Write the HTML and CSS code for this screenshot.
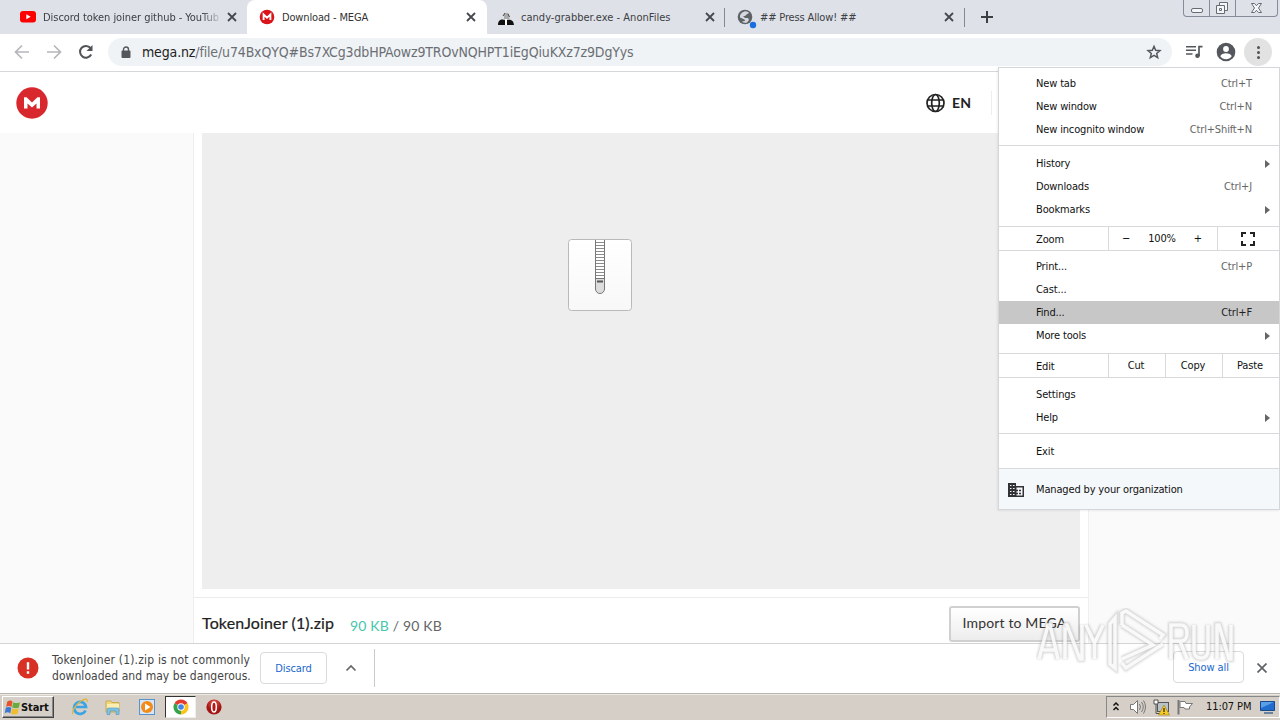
FILE: index.html
```html
<!DOCTYPE html>
<html lang="en">
<head>
<meta charset="utf-8">
<title>Download - MEGA</title>
<link rel="stylesheet" href="styles.css">
</head>
<body>
<div class="tabs">
  <div class="tab first">
    <svg class="fav" width="16" height="16" viewBox="0 0 16 16"><rect y="2" width="16" height="11.5" rx="3" fill="#f00"/><path d="M6.3 5.2v5l4.4-2.5z" fill="#fff"/></svg>
    <span class="title fade">Discord token joiner github - YouTub</span>
    <svg class="x" width="10" height="10" viewBox="0 0 10 10"><path d="M1 1l8 8M9 1l-8 8"/></svg>
  </div>
  <div class="tab active">
    <svg class="fav" width="16" height="16" viewBox="0 0 16 16"><circle cx="8" cy="8" r="7.3" fill="#d9141b"/><path d="M4.6 11V5.5L8 8.7l3.4-3.2V11" fill="none" stroke="#fff" stroke-width="1.9"/></svg>
    <span class="title">Download - MEGA</span>
    <svg class="x" width="10" height="10" viewBox="0 0 10 10"><path d="M1 1l8 8M9 1l-8 8"/></svg>
  </div>
  <div class="tab third">
    <svg class="fav" width="16" height="18" viewBox="0 0 16 18"><path d="M0 17c0-4 2-5.500 4.500-5.500l2.500.5v5zM9 17v-5c3.500-.8 6.500 0 7 5z" fill="#111"/><path d="M6 7c1-2.500 4-3 5-.5l.5 5H6z" fill="#aaa"/><path d="M5 8l2-3M10 6l1.500 3" stroke="#444"/><path d="M8 11v6" stroke="#fff" stroke-width="2"/></svg>
    <span class="title">candy-grabber.exe - AnonFiles</span>
    <svg class="x" width="10" height="10" viewBox="0 0 10 10"><path d="M1 1l8 8M9 1l-8 8"/></svg>
  </div>
  <div class="tab fourth">
    <svg class="fav" width="20" height="20" viewBox="0 0 20 20"><circle cx="8" cy="8" r="7.300" fill="#5f6368"/><path d="M7.500 2.500C9 2 11 3 12 4L9.500 5.500 8 7 6 7 8 9l3 0 1 2-2 2.500c-2 .8-4 0-5-1l3-.5-.5-1.500L3 8.500C2.500 6 4 3.500 7.500 2.500z" fill="#d5d9df"/><circle cx="16" cy="16" r="3.200" fill="#1a6ee0"/></svg>
    <span class="title">## Press Allow! ##</span>
    <svg class="x" width="10" height="10" viewBox="0 0 10 10"><path d="M1 1l8 8M9 1l-8 8"/></svg>
  </div>
  <svg class="plus" width="12" height="12" viewBox="0 0 12 12"><path d="M6 0v12M0 6h12" stroke="#3c4043" stroke-width="2"/></svg>
  <div class="winctl">
    <div><svg width="25" height="16"><rect x="7.500" y="8.500" width="11" height="4" rx="1.500" fill="#f5f6f7" stroke="#666c75"/></svg></div>
    <div><svg width="25" height="16"><path d="M9.500 2.500h8v8h-8z" fill="#f5f6f7" stroke="#666c75"/><path d="M6.500 5.500h8v8h-8z" fill="#f5f6f7" stroke="#666c75"/><path d="M9.500 8.500h2v2h-2z" fill="none" stroke="#666c75"/></svg></div>
    <div><svg width="41" height="16"><path d="M15.500 3.500h3l2 2.200 2-2.200h3l-3 4.500 3 4.500h-3l-2-2.200-2 2.200h-3l3-4.500z" fill="#f5f6f7" stroke="#666c75"/></svg></div>
  </div>
</div>

<div class="toolbar">
  <svg width="16" height="16" viewBox="0 0 16 16" class="arrow"><path d="M15 8H2M8 1.500L1.500 8 8 14.500"/></svg>
  <svg width="16" height="16" viewBox="0 0 16 16" class="arrow"><path d="M1 8h13M8 1.500L14.500 8 8 14.500"/></svg>
  <svg width="16" height="16" viewBox="0 0 16 16" class="reload"><path d="M13.200 10.500A5.900 5.900 0 1 1 12.500 4" fill="none" stroke="#505357" stroke-width="2"/><path d="M14.500 1v6H8.500z" fill="#505357"/></svg>
  <div class="omnibox">
    <svg width="10" height="13" viewBox="0 0 10 13"><path d="M2.500 5V3.500a2.500 2.500 0 0 1 5 0V5" fill="none" stroke="#54585d" stroke-width="1.400"/><rect x=".5" y="4.500" width="9" height="7.500" rx="1" fill="#54585d"/></svg>
    <span class="url"><b>mega.nz</b>/file/u74BxQYQ#Bs7XCg3dbHPAowz9TROvNQHPT1iEgQiuKXz7z9DgYys</span>
    <svg class="star" width="16" height="16" viewBox="0 0 24 24"><path d="M12 3.500l2.500 6 6.500.5-5 4.300 1.600 6.200L12 17.200l-5.600 3.300L8 14.300 3 10l6.500-.5z" fill="none" stroke="#54585d" stroke-width="2.200"/></svg>
  </div>
  <svg class="music" width="18" height="14" viewBox="0 0 18 14"><path d="M0 1.700h10M0 5.300h10M0 9h6.500" stroke="#54585d" stroke-width="1.500"/><path d="M13 11V1.700h3.500" fill="none" stroke="#54585d" stroke-width="1.700"/><circle cx="11.500" cy="10.800" r="2.300" fill="#54585d"/></svg>
  <svg class="user" width="20" height="20" viewBox="0 0 20 20"><circle cx="10" cy="10" r="9.300" fill="#54585d"/><circle cx="10" cy="7" r="2.900" fill="#fff"/><path d="M4.300 14.300c1-4 10.400-4 11.400 0-2.500 4-8.900 4-11.400 0z" fill="#fff"/></svg>
  <div class="dots"><i></i><i></i><i></i></div>
</div>

<div class="page">
  <header>
    <svg width="32" height="32" viewBox="0 0 32 32"><circle cx="16" cy="16" r="15.700" fill="#d9272e"/><path d="M8 21.500V10.200h2.600L16 15.500l5.400-5.300H24v11.300h-3.500v-5L16 20.600l-4.500-4.100v5z" fill="#fff"/></svg>
    <svg class="globe" width="20" height="20" viewBox="0 0 20 20" fill="none" stroke="#222" stroke-width="1.700"><circle cx="10.500" cy="10" r="8.500"/><ellipse cx="10.500" cy="10" rx="3.800" ry="8.500"/><path d="M2.500 7h16M2.500 13h16"/></svg>
    <span class="lang">EN</span>
    <span class="hdiv"></span>
  </header>
  <div class="content">
    <div class="card">
      <div class="preview">
        <svg width="64" height="72" viewBox="0 0 64 72"><defs><linearGradient id="paper" x2="0" y2="1"><stop stop-color="#fff"/><stop offset="1" stop-color="#f8f8f8"/></linearGradient></defs><rect x=".5" y=".5" width="63" height="71" rx="3" fill="url(#paper)" stroke="#b9b9b9"/><path d="M27 1h10v49a5 5 0 0 1-10 0z" fill="#fff"/><path d="M28 3.500h8m-8 3h8m-8 3h8m-8 3h8m-8 3h8m-8 3h8m-8 3h8m-8 3h8m-8 3h8m-8 3h8m-8 3h8m-8 3h8" stroke="#8b8b8b"/><path d="M27.500 40h9v10a4.500 4.500 0 0 1-9 0z" fill="#ddd"/><path d="M27.500 1v49a4.500 4.500 0 0 0 9 0V1M27.500 39.500h9" fill="none" stroke="#777"/><path d="M29 42.500h6" stroke="#555" stroke-width="2"/></svg>
      </div>
      <div class="fileinfo">
        <span class="fname">TokenJoiner (1).zip</span>
        <span class="size"><em>90 KB</em> / 90 KB</span>
        <button class="import">Import to MEGA</button>
      </div>
    </div>
  </div>
</div>

<div class="shelf">
  <svg width="22" height="22" viewBox="0 0 22 22"><circle cx="11" cy="11" r="10.500" fill="#d93025"/><path d="M11 5.300v7.200M11 14.200v2.600" stroke="#fff" stroke-width="2.400"/></svg>
  <div class="warn"><span class="w1">TokenJoiner (1).zip is not commonly</span><span class="w2">downloaded and may be dangerous.</span></div>
  <button class="discard">Discard</button>
  <svg class="chev" width="12" height="8" viewBox="0 0 12 8"><path d="M1.500 6.500L6 2l4.500 4.500" fill="none" stroke="#666" stroke-width="1.700"/></svg>
  <span class="sdiv"></span>
  <button class="showall">Show all</button>
  <svg class="close" width="10" height="10" viewBox="0 0 10 10"><path d="M.5.5l9 9M9.500.5l-9 9" stroke="#5f6368" stroke-width="1.700"/></svg>
</div>

<div class="taskbar">
  <div class="start"><svg width="17" height="17" viewBox="0 0 16 16"><path d="M3 2.500c2-1.500 4-1.500 5 0L7 7.500c-2-1.500-3.500-1-5 0z" fill="#e5532d"/><path d="M8.700 3c2 1.300 4 1 6.300 0L14 8c-2 1-4 1-6.300 0z" fill="#69ac3c"/><path d="M1.700 8.300c2-1.300 3.500-1 5.200 0l-1 5c-2-1.300-3.500-1-5.200 0z" fill="#3c78cf"/><path d="M7.500 8.800c2 1.300 4 1 6.300 0l-1 5c-2 1-4 1-6.300 0z" fill="#f0bd31"/></svg><span>Start</span></div>
  <svg class="q1" width="18" height="18" viewBox="0 0 18 18"><path d="M14.500 12.500A6 6 0 1 1 15 9H5" fill="none" stroke="#3ba4e4" stroke-width="2.700"/><path d="M2 16C0 14 5 6 10 3c4-2.500 7-2.500 6 1" fill="none" stroke="#dfb73c" stroke-width="1.300"/></svg>
  <svg class="q2" width="18" height="18" viewBox="0 0 18 18"><path d="M2 3h5l1 1.500h7V14H2z" fill="#efd77c" stroke="#c9ab50"/><path d="M3 6h12v4H3z" fill="#faeeb3"/><path d="M3 16.500v-5q0-1.500 2-1.500h8q2 0 2 1.500v5h-3V13H6v3.500z" fill="#7bc0e6" stroke="#5494bd" stroke-width=".6"/></svg>
  <svg class="q3" width="18" height="18" viewBox="0 0 18 18"><rect x="1.500" y="1.500" width="15" height="15" fill="#d6e6f7" stroke="#5793cc"/><circle cx="9" cy="9" r="6" fill="#f38b19"/><path d="M7 5.500v7L12.500 9z" fill="#fff"/></svg>
  <div class="running"><svg width="16" height="16" viewBox="0 0 16 16"><path d="M8 8L1.500 4.250A7.500 7.500 0 0 1 14.500 4.250z" fill="#e33b2e"/><path d="M8 8l6.500-3.750A7.500 7.500 0 0 1 8 15.500z" fill="#fbc31b"/><path d="M8 8v7.500A7.500 7.500 0 0 1 1.500 4.250z" fill="#36a34c"/><circle cx="8" cy="8" r="3.700" fill="#fff"/><circle cx="8" cy="8" r="2.800" fill="#4285e8"/></svg></div>
  <svg class="q5" width="16" height="16" viewBox="0 0 16 16"><defs><radialGradient id="red" cy=".25"><stop stop-color="#ea5a50"/><stop offset="1" stop-color="#a31412"/></radialGradient></defs><circle cx="8" cy="8" r="7.600" fill="url(#red)"/><ellipse cx="8" cy="8" rx="2.300" ry="5" fill="#b01a18" stroke="#fff" stroke-width="1.500"/></svg>
  <div class="tray">
    <svg width="8" height="12" viewBox="0 0 8 12"><path d="M1.500 4.500L4 2l2.500 2.500M1.500 9L4 6.500 6.500 9" fill="none" stroke="#111" stroke-width="1.500"/></svg>
    <svg class="snd" width="18" height="16" viewBox="0 0 18 16"><path d="M1.500 5.500h3l4-4v13l-4-4h-3z" fill="#fff" stroke="#777"/><path d="M10.500 5q2 3 0 6M12.500 3q3.500 5 0 10M14.500 1.500q4 6.500 0 13" fill="none" stroke="#777"/></svg>
    <svg class="net" width="17" height="17" viewBox="0 0 17 17"><rect x="4.500" y="3.500" width="11" height="9" fill="#b7c2cb" stroke="#555"/><path d="M1 1h4v4H1z" fill="#fff" stroke="#555"/><path d="M3 5v9.500h5" fill="none" stroke="#555"/><path d="M11 6l5.500 10h-11z" fill="#f7cd25" stroke="#a9821a" stroke-width=".7"/><path d="M11 9v4M11 14v1" stroke="#222" stroke-width="1.200"/></svg>
    <svg class="flag" width="17" height="16" viewBox="0 0 17 16"><path d="M1.500 1v14.500" stroke="#777" stroke-width="2"/><path d="M3 2.500h5l1 2h6.500l-3 3.500 0 2H8l-1-1.500H3z" fill="#fff" stroke="#777"/></svg>
    <span class="clock">11:07 PM</span>
    <svg class="desk" width="15" height="14" viewBox="0 0 15 14"><path d="M.5 1.500h14v9H.5z" fill="#216dcd" stroke="#174990"/><path d="M1 2h13L1 8z" fill="#5b9ee8"/><path d="M4 13h9" stroke="#45688f" stroke-width="1.500"/></svg>
  </div>
</div>

<div class="menu">
  <div class="grp g1">
    <div class="row"><span>New tab</span><kbd>Ctrl+T</kbd></div>
    <div class="row"><span>New window</span><kbd>Ctrl+N</kbd></div>
    <div class="row"><span>New incognito window</span><kbd>Ctrl+Shift+N</kbd></div>
  </div>
  <div class="grp g2">
    <div class="row"><span>History</span><u></u></div>
    <div class="row"><span>Downloads</span><kbd>Ctrl+J</kbd></div>
    <div class="row"><span>Bookmarks</span><u></u></div>
  </div>
  <div class="cells zoomrow"><span class="lbl">Zoom</span><div class="zc"><span>−</span><span>100%</span><span>+</span></div><div class="full"><svg width="14" height="14" viewBox="0 0 14 14"><path d="M1 5V1h4M9 1h4v4M13 9v4H9M5 13H1V9" fill="none" stroke="#222" stroke-width="2"/></svg></div></div>
  <div class="grp g3">
    <div class="row"><span>Print...</span><kbd>Ctrl+P</kbd></div>
    <div class="row"><span>Cast...</span></div>
    <div class="row hot"><span>Find...</span><kbd>Ctrl+F</kbd></div>
    <div class="row"><span>More tools</span><u></u></div>
  </div>
  <div class="cells"><span class="lbl">Edit</span><div class="c">Cut</div><div class="c">Copy</div><div class="c">Paste</div></div>
  <div class="grp g4">
    <div class="row"><span>Settings</span></div>
    <div class="row"><span>Help</span><u></u></div>
  </div>
  <div class="grp g5"><div class="row"><span>Exit</span></div></div>
  <div class="managed"><svg width="16" height="14" viewBox="0 0 16 14"><path d="M0 0h8v3h8v11H0z" fill="#303236"/><path d="M2 2.500h1.500M5 2.500h1.500M2 5.500h1.500M5 5.500h1.500M2 8.500h1.500M5 8.500h1.500M2 11.500h1.500M5 11.500h1.500" stroke="#f6f9fc"/><path d="M8.500 4.500h6v8h-6z" fill="#f6f9fc"/><path d="M8 7.500h2M11 7.500h2M8 10.500h2M11 10.500h2" stroke="#303236" stroke-width="1.500"/></svg><span>Managed by your organization</span></div>
</div>

<svg class="mark" width="200" height="66" viewBox="0 0 200 66">
  <defs>
    <filter id="soft" x="-5%" y="-10%" width="110%" height="120%"><feGaussianBlur stdDeviation="1.2"/></filter>
    <g id="logo"><path d="M3 51L12 17h2L22 51M7 42h12M29 51V17h2l13 34h2V17M50 17l8.500 18v16M58.500 35L67 17M135 51V17h10q6 0 6 8t-6 8h-10M144 33l7 18M158 17v25q0 8 7 8t7-8V17M181 51V17h2l10 34h2V17"/><path d="M74 16v40l5 4V10zM86 17V5l4-2 37 24-3 4M86 17l31 20-31 14M127 36L90 60l-4-5"/></g>
  </defs>
  <use href="#logo" fill="none" stroke="#999" stroke-opacity=".4" stroke-width="6" filter="url(#soft)"/>
  <use href="#logo" fill="none" stroke="#fff" stroke-opacity=".85" stroke-width="3.500"/>
</svg>
</body>
</html>
```
FILE: styles.css
```css
* { box-sizing: border-box; }
body { margin: 0; width: 1280px; height: 720px; overflow: hidden; display: flex; flex-direction: column; position: relative; background: #fff; font: 11px/16px "DejaVu Sans Condensed", "DejaVu Sans", sans-serif; color: #111; }
svg { display: block; flex: none; }
button { font: inherit; padding: 0; }
span { white-space: nowrap; }

.tabs { height: 34px; flex: none; background: #dee1e8; display: flex; align-items: center; }
.tab { height: 34px; display: flex; align-items: center; position: relative; color: #3c4043; }
.first { width: 247px; padding: 0 9px 0 20px; }
.active { width: 240px; background: #fff; border-radius: 8px 8px 0 0; padding: 0 11px 0 12px; color: #333; }
.third { width: 238px; padding: 0 10px 0 11px; }
.fourth { width: 240px; padding: 0 11px 0 12px; }
.third::after, .fourth::after { content: ""; position: absolute; right: 0; top: 8px; width: 1px; height: 19px; background: #85898f; }
.title { margin-left: 7px; padding-top: 1px; flex: 1; overflow: hidden; font-size: 11px; }
.active .title { letter-spacing: -.15px; }
.third .title { letter-spacing: .02px; }
.fourth .title { letter-spacing: -.15px; }
.fourth .fav { margin: 3px -4px 0 0; }
.fade { flex: none; width: 180px; letter-spacing: -.05px; -webkit-mask-image: linear-gradient(90deg, #000 88%, transparent 100%); margin-right: 4px; }
.x path { stroke: #45494e; stroke-width: 1.800; }
.plus { margin-left: 16px; }
.winctl { display: flex; align-self: flex-start; margin-left: 190px; border: 1px solid #858b98; border-top: 0; border-radius: 0 0 4px 4px; height: 17px; }
.winctl div { border-right: 1px solid #858b98; }
.winctl div:last-child { border: 0; }

.toolbar { height: 38px; flex: none; border-bottom: 1px solid #d5d7da; background: #fff; display: flex; align-items: center; padding: 0 0 1px 14px; }
.toolbar > svg { margin-right: 16px; }
.arrow path { fill: none; stroke: #b5b7ba; stroke-width: 1.700; }
.toolbar .reload { margin-right: 14px; }
.omnibox { width: 1064px; height: 28px; border-radius: 14px; background: #f0f3f6; display: flex; align-items: center; padding: 0 10px 0 13px; }
.url { margin-left: 11px; flex: 1; font-size: 14px; color: #6b6f74; letter-spacing: -.15px; }
.url b { font-weight: 400; color: #222; }
.toolbar .music { margin: 0 12px 0 14px; }
.toolbar .user { margin-right: 8px; }
.dots { width: 28px; height: 28px; border-radius: 50%; background: #e2e2e3; display: flex; flex-direction: column; align-items: center; justify-content: center; gap: 2px; }
.dots i { width: 3px; height: 3px; border-radius: 50%; background: #505357; }

.page { height: 571px; flex: none; display: flex; flex-direction: column; overflow: hidden; background: #fafafa; }
header { height: 61px; flex: none; background: #fff; display: flex; align-items: center; padding: 1px 0 0 16px; }
.globe { margin-left: 877px; }
.lang { font: 700 14px/20px Lato, sans-serif; margin-left: 7px; letter-spacing: .2px; color: #222; }
.hdiv { width: 1px; height: 24px; background: #eee; margin-left: 20px; }
.content { display: flex; justify-content: center; }
.card { width: 896px; height: 510px; margin-left: 2px; background: #fff; border: solid #efefef; border-width: 0 1px; }
.preview { height: 456px; margin: 0 8px; background: #eee; display: flex; justify-content: center; padding: 106px 83px 0 0; }
.fileinfo { margin-top: 8px; height: 46px; border-top: 1px solid #ececec; padding: 0 8px; display: flex; align-items: flex-start; font-family: Lato, sans-serif; }
.fname { font-size: 16px; line-height: 20px; margin-top: 15px; color: #222; letter-spacing: .13px; -webkit-text-stroke: .2px; }
.size { font-size: 14px; line-height: 20px; margin: 18px 0 0 16px; color: #666; letter-spacing: .15px; }
.size em { font-style: normal; color: #46c6ac; }
.import { margin: 8px 0 0 auto; width: 131px; height: 36px; border: 2px solid #d0d0d0; border-radius: 3px; background: linear-gradient(#fff, #ededed); font-size: 14px; color: #333; letter-spacing: .15px; padding-bottom: 2px; }

.shelf { height: 50px; flex: none; background: #fff; border-top: 1px solid #d4d4d4; display: flex; align-items: center; padding: 0 13px 1px 17px; }
.warn { width: 200px; margin: 0 0 0 13px; display: flex; flex-direction: column; font-size: 12px; line-height: 16px; color: #444; }
.w1 { letter-spacing: .18px; }
.w2 { letter-spacing: .05px; }
.discard, .showall { height: 32px; border: 1px solid #d8dadd; border-radius: 4px; background: #fff; color: #1a67cc; font-size: 11px; letter-spacing: -.1px; padding-top: 1px; }
.discard { width: 67px; margin-left: 8px; }
.chev { margin-left: 18px; }
.sdiv { width: 1px; height: 38px; background: #cacaca; margin-left: 17px; }
.showall { width: 71px; margin: -2px 13px 0 auto; }

.taskbar { flex: 1; background: #d5cfc7; border-top: 1px solid #b9b6b1; box-shadow: inset 0 1px #ece9e4; display: flex; align-items: center; padding-left: 2px; }
.start { width: 52px; height: 22px; border: 1px solid; border-color: #fff #444 #444 #fff; box-shadow: inset -1px -1px #888; display: flex; align-items: center; padding-left: 1px; font: bold 11px "DejaVu Sans Condensed", sans-serif; letter-spacing: -.1px; }
.q1 { margin-left: 17px; } .q2 { margin-left: 15px; } .q3 { margin-left: 16px; }
.running { width: 31px; height: 22px; margin-left: 9px; background: #fff; border: 1px solid; border-color: #333 #eee #eee #333; padding: 2px 7px; }
.q5 { margin-left: 10px; }
.tray { margin-left: auto; width: 174px; height: 22px; border: 1px solid; border-color: #888 #fff #fff #888; display: flex; align-items: center; padding-left: 5px; }
.snd { margin-left: 9px; } .net { margin-left: 6px; } .flag { margin-left: 7px; }
.clock { margin-left: 12px; letter-spacing: -.1px; } .desk { margin-left: 9px; }

.menu { position: absolute; left: 998px; top: 67px; width: 282px; height: 443px; background: #fff; border: 1px solid #d4d7da; box-shadow: -1px 1px 2px #0001; display: flex; flex-direction: column; letter-spacing: -.15px; }
.grp { border-bottom: 1px solid #d7d9db; flex: none; }
.g1 { height: 78px; padding-top: 4px; } .g2 { height: 81px; padding-top: 6px; } .g3 { height: 103px; padding-top: 4px; } .g4 { height: 56px; padding-top: 5px; } .g5 { height: 35px; padding-top: 6px; }
.row { height: 23px; display: flex; align-items: center; justify-content: space-between; padding: 0 27px 0 37px; }
.g3 .row { padding-top: 1px; }
.row kbd { font: inherit; color: #666; }
.hot { background: #c7c7c7; }
.row.hot kbd { color: #222; }
.row u { border: 4px solid transparent; border-left: 5px solid #666; border-right: 0; margin-right: -18px; }
.cells { height: 24px; flex: none; border-bottom: 1px solid #d7d9db; display: flex; line-height: 23px; }
.lbl { width: 109px; padding: 1px 0 0 37px; }
.zc { width: 109px; border-left: 1px solid #d7d9db; display: flex; justify-content: space-between; padding: 0 15px 0 13px; }
.full { flex: 1; border-left: 1px solid #d7d9db; display: flex; align-items: center; padding-left: 23px; }
.c { width: 57px; border-left: 1px solid #d7d9db; text-align: center; padding-right: 2px; }
.managed { flex: 1; background: #f5f8fb; display: flex; align-items: center; padding: 1px 0 0 9px; }
.managed span { margin-left: 12px; }

.mark { position: absolute; left: 1036px; top: 608px; }
```
